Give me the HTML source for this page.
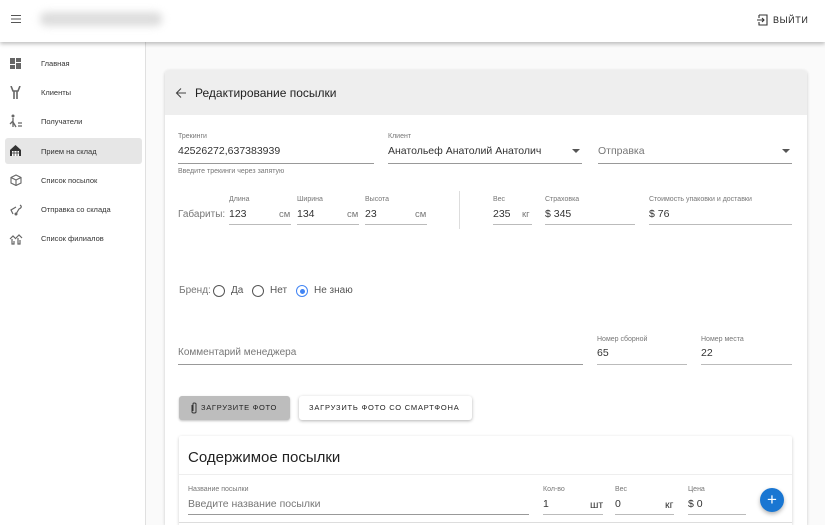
<!DOCTYPE html>
<html><head><meta charset="utf-8"><style>
*{margin:0;padding:0;box-sizing:border-box}
html,body{width:825px;height:525px;overflow:hidden}
body{background:#fafafa;font-family:"Liberation Sans",sans-serif;color:#222;position:relative}
.a{position:absolute;white-space:nowrap}
.lab{font-size:7px;color:#777}
.val{font-size:10.5px;color:#333}
.ul{position:absolute;height:1px;background:#999}
.ph{font-size:10.5px;color:#777}
.nav{font-size:7.5px;color:#333}
</style></head><body>
<div class="a" style="left:0;top:0;width:825px;height:42px;background:#fff;box-shadow:0 2px 4px rgba(0,0,0,.25);z-index:2"></div>
<div class="a" style="left:11px;top:15px;width:10px;height:1px;background:#555;z-index:3;box-shadow:0 3.5px 0 #555,0 7px 0 #555"></div>
<div class="a" style="left:40px;top:12px;width:122px;height:14px;background:#ddd;filter:blur(4px);border-radius:6px;z-index:3"></div>
<svg class="a" style="left:756px;top:14px;z-index:3" width="12" height="12" viewBox="0 0 12 12"><path d="M3 1H11V11H3V8M3 4V1M1 6H8M6 4L8 6L6 8" fill="none" stroke="#333" stroke-width="1.1"/></svg>
<div class="a" style="left:773px;top:15px;font-size:9px;letter-spacing:.6px;z-index:3;color:#222">ВЫЙТИ</div>

<div class="a" style="left:0;top:42px;width:146px;height:483px;background:#fff;border-right:1px solid #e0e0e0"></div>
<div class="a" style="left:5px;top:138px;width:137px;height:26px;background:#e6e6e6;border-radius:3px"></div>
<svg class="a" style="left:10px;top:58px" width="11" height="11"><rect x="0" y="0" width="5" height="6" fill="#666"/><rect x="6" y="0" width="5" height="4" fill="#666"/><rect x="0" y="7" width="5" height="4" fill="#666"/><rect x="6" y="5" width="5" height="6" fill="#666"/></svg>
<svg class="a" style="left:10px;top:86px" width="11" height="14"><path d="M1 0L3 5H8L10 0M4 5V13M7 5V13" stroke="#666" stroke-width="1.6" fill="none"/></svg>
<svg class="a" style="left:9px;top:114px" width="14" height="14"><circle cx="4" cy="2" r="1.5" fill="#666"/><path d="M4 4V13M4 7L1 10M4 8L7 13M9 9H13M9 12H13" stroke="#666" stroke-width="1.3" fill="none"/></svg>
<svg class="a" style="left:9px;top:144px" width="13" height="13"><path d="M1 6L6.5 1L12 6V12H1Z" fill="#333"/><rect x="3" y="7" width="7" height="5" fill="#fff"/><path d="M3 9H10M5 7V12M8 7V12" stroke="#333" stroke-width=".8"/></svg>
<svg class="a" style="left:10px;top:174px" width="12" height="12"><path d="M6 1L11 3.5V9L6 11.5L1 9V3.5Z M1 3.5L6 6L11 3.5M6 6V11.5" fill="none" stroke="#666" stroke-width="1.1"/></svg>
<svg class="a" style="left:10px;top:203px" width="13" height="13"><path d="M3 11L1 7L6 4M10 2Q13 4 9 6L6 11" fill="none" stroke="#666" stroke-width="1.2"/><circle cx="6" cy="11" r="1.5" fill="#666"/></svg>
<svg class="a" style="left:9px;top:232px" width="14" height="13"><path d="M1 7L4 4L7 7M3 7V12H5V9M7 6L10 3L13 6M9 6V12H11V8" fill="none" stroke="#666" stroke-width="1.2"/></svg>
<div class="a nav" style="left:41px;top:59px">Главная</div>
<div class="a nav" style="left:41px;top:88px">Клиенты</div>
<div class="a nav" style="left:41px;top:117px">Получатели</div>
<div class="a nav" style="left:41px;top:147px">Прием на склад</div>
<div class="a nav" style="left:41px;top:176px">Список посылок</div>
<div class="a nav" style="left:41px;top:205px">Отправка со склада</div>
<div class="a nav" style="left:41px;top:234px">Список филиалов</div>

<div class="a" style="left:165px;top:70px;width:642px;height:455px;background:#fff;border-radius:4px 4px 0 0;box-shadow:0 1px 3px rgba(0,0,0,.2)"></div>
<div class="a" style="left:165px;top:70px;width:642px;height:45px;background:#eeeeee;border-radius:4px 4px 0 0"></div>
<svg class="a" style="left:175px;top:87px" width="12" height="12"><path d="M11 6H1.5M6 1.5L1.5 6L6 10.5" fill="none" stroke="#444" stroke-width="1.1"/></svg>
<div class="a" style="left:195px;top:86px;font-size:12px;color:#222">Редактирование посылки</div>

<div class="a lab" style="left:178px;top:133px">Трекинги</div>
<div class="a val" style="left:178px;top:145px">42526272,637383939</div>
<div class="ul" style="left:178px;top:163px;width:196px"></div>
<div class="a lab" style="left:178px;top:168px">Введите трекинги через запятую</div>
<div class="a lab" style="left:388px;top:133px">Клиент</div>
<div class="a val" style="left:388px;top:145px">Анатольеф Анатолий Анатолич</div>
<div class="ul" style="left:388px;top:163px;width:194px"></div>
<div class="a ph" style="left:598px;top:145px">Отправка</div>
<div class="ul" style="left:598px;top:163px;width:194px"></div>
<svg class="a" style="left:572px;top:149px" width="8" height="5"><path d="M0 0H8L4 4Z" fill="#555"/></svg>
<svg class="a" style="left:782px;top:149px" width="8" height="5"><path d="M0 0H8L4 4Z" fill="#555"/></svg>

<div class="a ph" style="left:178px;top:209px;font-size:10px">Габариты:</div>
<div class="a lab" style="left:229px;top:196px">Длина</div><div class="a val" style="left:229px;top:208px">123</div><div class="a ph" style="left:279px;top:209px;font-size:9.5px">см</div><div class="ul" style="left:229px;top:224px;width:62px;background:#bbb"></div>
<div class="a lab" style="left:297px;top:196px">Ширина</div><div class="a val" style="left:297px;top:208px">134</div><div class="a ph" style="left:347px;top:209px;font-size:9.5px">см</div><div class="ul" style="left:297px;top:224px;width:62px;background:#bbb"></div>
<div class="a lab" style="left:365px;top:196px">Высота</div><div class="a val" style="left:365px;top:208px">23</div><div class="a ph" style="left:415px;top:209px;font-size:9.5px">см</div><div class="ul" style="left:365px;top:224px;width:62px;background:#bbb"></div>
<div class="a" style="left:459px;top:191px;width:1px;height:38px;background:#ddd"></div>
<div class="a lab" style="left:493px;top:196px">Вес</div><div class="a val" style="left:493px;top:208px">235</div><div class="a ph" style="left:522px;top:209px;font-size:9.5px">кг</div><div class="ul" style="left:493px;top:224px;width:39px;background:#bbb"></div>
<div class="a lab" style="left:545px;top:196px">Страховка</div><div class="a val" style="left:545px;top:208px">$ 345</div><div class="ul" style="left:545px;top:224px;width:90px;background:#bbb"></div>
<div class="a lab" style="left:649px;top:196px">Стоимость упаковки и доставки</div><div class="a val" style="left:649px;top:208px">$ 76</div><div class="ul" style="left:649px;top:224px;width:143px;background:#bbb"></div>

<div class="a ph" style="left:179px;top:285px;font-size:10px">Бренд:</div>
<div class="a" style="left:213px;top:285px;width:12px;height:12px;border:1.3px solid #555;border-radius:50%"></div>
<div class="a val" style="left:231px;top:285px;font-size:10px;color:#555">Да</div>
<div class="a" style="left:252px;top:285px;width:12px;height:12px;border:1.3px solid #555;border-radius:50%"></div>
<div class="a val" style="left:270px;top:285px;font-size:10px;color:#555">Нет</div>
<div class="a" style="left:296px;top:285px;width:12px;height:12px;border:1.3px solid #4285f4;border-radius:50%"></div>
<div class="a" style="left:299.5px;top:288.5px;width:5px;height:5px;background:#4285f4;border-radius:50%"></div>
<div class="a val" style="left:314px;top:285px;font-size:10px;color:#555">Не знаю</div>

<div class="a ph" style="left:178px;top:347px;font-size:10px">Комментарий менеджера</div>
<div class="ul" style="left:178px;top:364px;width:405px"></div>
<div class="a lab" style="left:597px;top:336px">Номер сборной</div><div class="a val" style="left:597px;top:347px">65</div><div class="ul" style="left:597px;top:364px;width:90px;background:#bbb"></div>
<div class="a lab" style="left:701px;top:336px">Номер места</div><div class="a val" style="left:701px;top:347px">22</div><div class="ul" style="left:701px;top:364px;width:91px;background:#bbb"></div>

<div class="a" style="left:179px;top:396px;width:111px;height:24px;background:#bdbdbd;border-radius:3px;box-shadow:0 1px 2px rgba(0,0,0,.25)"></div>
<svg class="a" style="left:191px;top:402px" width="6" height="12"><path d="M1 3V10Q1 11 3 11Q5 11 5 10V2Q5 1 3 1Q2 1 2 2V9" fill="none" stroke="#333" stroke-width="1"/></svg>
<div class="a" style="left:201px;top:403px;font-size:7.5px;letter-spacing:.7px;color:#222">ЗАГРУЗИТЕ ФОТО</div>
<div class="a" style="left:299px;top:396px;width:173px;height:24px;background:#fff;border-radius:3px;box-shadow:0 1px 3px rgba(0,0,0,.3)"></div>
<div class="a" style="left:309px;top:403px;font-size:7.5px;letter-spacing:.8px;color:#222">ЗАГРУЗИТЬ ФОТО СО СМАРТФОНА</div>

<div class="a" style="left:179px;top:436px;width:613px;height:89px;background:#fff;box-shadow:0 1px 3px rgba(0,0,0,.2);border-radius:2px 2px 0 0"></div>
<div class="a" style="left:188px;top:449px;font-size:15px;color:#222">Содержимое посылки</div>
<div class="a" style="left:179px;top:474px;width:613px;height:1px;background:#eee"></div>
<div class="a lab" style="left:188px;top:486px">Название посылки</div><div class="a ph" style="left:188px;top:498px">Введите название посылки</div><div class="ul" style="left:188px;top:514px;width:341px"></div>
<div class="a lab" style="left:543px;top:486px">Кол-во</div><div class="a val" style="left:543px;top:498px">1</div><div class="a ph" style="left:590px;top:499px;color:#333">шт</div><div class="ul" style="left:543px;top:514px;width:60px;background:#bbb"></div>
<div class="a lab" style="left:615px;top:486px">Вес</div><div class="a val" style="left:615px;top:498px">0</div><div class="a ph" style="left:665px;top:499px;color:#333">кг</div><div class="ul" style="left:615px;top:514px;width:59px;background:#bbb"></div>
<div class="a lab" style="left:688px;top:486px">Цена</div><div class="a val" style="left:688px;top:498px">$ 0</div><div class="ul" style="left:688px;top:514px;width:58px;background:#bbb"></div>
<div class="a" style="left:760px;top:488px;width:24px;height:24px;border-radius:50%;background:#1976d2;box-shadow:0 2px 4px rgba(0,0,0,.3);color:#fff;font-size:17px;line-height:23px;text-align:center">+</div>
<div class="a" style="left:179px;top:522px;width:613px;height:1px;background:#ddd"></div>
</body></html>
